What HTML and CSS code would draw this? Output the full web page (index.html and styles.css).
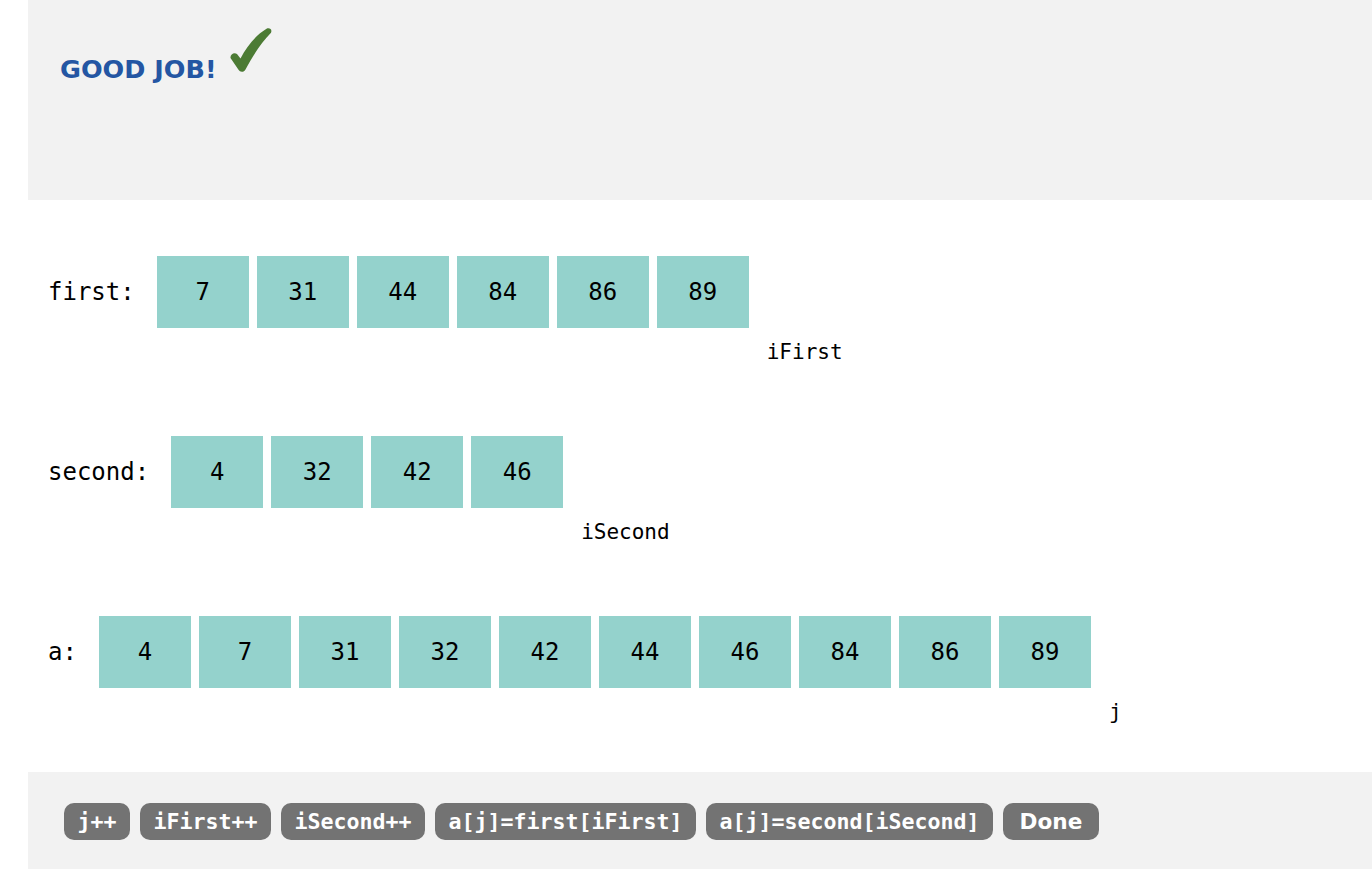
FILE: index.html
```html
<!DOCTYPE html>
<html lang="en">
<head>
<meta charset="utf-8">
<title>Merge</title>
<link rel="stylesheet" href="styles.css">
</head>
<body>
<div class="page">
  <header class="banner">
    <span class="verdict">GOOD JOB!</span>
    <svg class="check" viewBox="0 0 42 44" aria-hidden="true">
      <path d="M0.5,30 C0,26.5 4,24 7,26 L10.5,30.5 C17,18 26,7 36.5,0.8 C39.5,-0.6 42.5,1.5 41,4.8 C31,15 22,29 15.5,41.5 C14,44.5 10,44.5 8.5,41.8 Z"/>
    </svg>
  </header>

  <main class="arrays">
    <section class="row">
      <div class="line">
        <span class="label">first:</span>
        <span class="cell">7</span><span class="cell">31</span><span class="cell">44</span><span class="cell">84</span><span class="cell">86</span><span class="cell">89</span>
      </div>
      <div class="line pointer-line">
        <span class="label ghost">first:</span>
        <span class="slot"></span><span class="slot"></span><span class="slot"></span><span class="slot"></span><span class="slot"></span><span class="slot"></span>
        <span class="pointer">iFirst</span>
      </div>
    </section>

    <section class="row">
      <div class="line">
        <span class="label">second:</span>
        <span class="cell">4</span><span class="cell">32</span><span class="cell">42</span><span class="cell">46</span>
      </div>
      <div class="line pointer-line">
        <span class="label ghost">second:</span>
        <span class="slot"></span><span class="slot"></span><span class="slot"></span><span class="slot"></span>
        <span class="pointer">iSecond</span>
      </div>
    </section>

    <section class="row">
      <div class="line">
        <span class="label">a:</span>
        <span class="cell">4</span><span class="cell">7</span><span class="cell">31</span><span class="cell">32</span><span class="cell">42</span><span class="cell">44</span><span class="cell">46</span><span class="cell">84</span><span class="cell">86</span><span class="cell">89</span>
      </div>
      <div class="line pointer-line">
        <span class="label ghost">a:</span>
        <span class="slot"></span><span class="slot"></span><span class="slot"></span><span class="slot"></span><span class="slot"></span><span class="slot"></span><span class="slot"></span><span class="slot"></span><span class="slot"></span><span class="slot"></span>
        <span class="pointer">j</span>
      </div>
    </section>
  </main>

  <footer class="controls">
    <button class="btn">j++</button>
    <button class="btn">iFirst++</button>
    <button class="btn">iSecond++</button>
    <button class="btn">a[j]=first[iFirst]</button>
    <button class="btn">a[j]=second[iSecond]</button>
    <button class="btn btn-done">Done</button>
  </footer>
</div>
</body>
</html>
```

FILE: styles.css
```css
html, body {
  margin: 0;
  padding: 0;
  background: #ffffff;
}

body {
  font-family: "DejaVu Sans Mono", "Liberation Mono", monospace;
  color: #000;
}

.page {
  margin-left: 28px;
}

.banner {
  box-sizing: border-box;
  height: 200px;
  background: #f2f2f2;
  display: flex;
  align-items: flex-start;
  padding-left: 32px;
}

.verdict {
  font-family: "DejaVu Sans", "Verdana", sans-serif;
  font-weight: 700;
  font-size: 25.5px;
  line-height: 30px;
  color: #2456a3;
  margin-top: 54px;
}

.check {
  width: 42px;
  height: 44px;
  margin-left: 13px;
  margin-top: 28px;
  fill: #4c7b34;
}

.arrays {
  box-sizing: border-box;
  padding: 56px 0 48px 20px;
  display: flex;
  flex-direction: column;
  gap: 72px;
}

.row {
  display: flex;
  flex-direction: column;
  gap: 12px;
}

.line {
  display: flex;
  align-items: center;
  gap: 8px;
  height: 72px;
}

.label {
  font-size: 24px;
  margin-right: 14px;
  white-space: pre;
}

.cell {
  width: 92px;
  height: 72px;
  background: #94d2cc;
  display: flex;
  align-items: center;
  justify-content: center;
  font-size: 24px;
}

.pointer-line {
  height: 24px;
}

.ghost {
  visibility: hidden;
  line-height: 24px;
}

.slot {
  width: 92px;
  height: 1px;
}

.pointer {
  font-size: 21px;
  line-height: 24px;
  padding-left: 10px;
}

.controls {
  box-sizing: border-box;
  height: 97px;
  background: #f2f2f2;
  display: flex;
  align-items: flex-start;
  gap: 10px;
  padding: 31px 0 0 36px;
}

.btn {
  font-family: "DejaVu Sans Mono", "Liberation Mono", monospace;
  font-weight: 700;
  font-size: 21.6px;
  color: #ffffff;
  background: #737373;
  border: 0;
  border-radius: 10px;
  height: 37px;
  padding: 0 13.5px;
  line-height: 37px;
  cursor: pointer;
}

.btn-done {
  font-family: "DejaVu Sans", "Verdana", sans-serif;
  padding: 0 16.5px;
}
```
